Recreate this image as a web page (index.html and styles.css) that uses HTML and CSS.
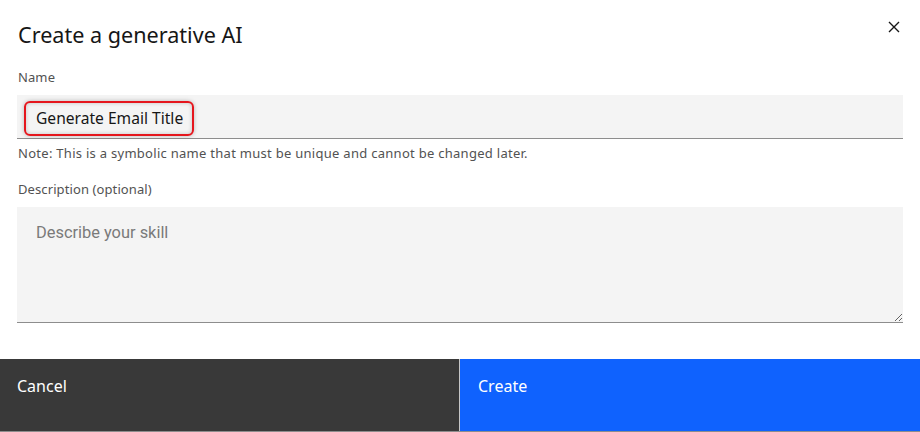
FILE: index.html
```html
<!DOCTYPE html>
<html lang="en">
<head>
<meta charset="utf-8">
<title>Create a generative AI</title>
<link rel="stylesheet" href="styles.css">
</head>
<body>
<div class="modal">
  <header class="modal-header">
    <h2 class="modal-title">Create a generative AI</h2>
    <button class="close" aria-label="Close">
      <svg width="12" height="12" viewBox="0 0 12 12"><path d="M1 1 L11 11 M11 1 L1 11" stroke="#161616" stroke-width="1.4" fill="none"/></svg>
    </button>
  </header>
  <div class="modal-body">
    <div class="label">Name</div>
    <div class="text-input"><span class="highlight">Generate Email Title</span></div>
    <div class="helper">Note: This is a symbolic name that must be unique and cannot be changed later.</div>
    <div class="label label-gap">Description (optional)</div>
    <textarea class="text-area" placeholder="Describe your skill"></textarea>
  </div>
  <footer class="modal-footer">
    <button class="btn btn-secondary">Cancel</button>
    <button class="btn btn-primary">Create</button>
  </footer>
</div>
</body>
</html>
```
FILE: styles.css
```css
* { box-sizing: border-box; }
html, body { margin: 0; padding: 0; background: #fff; }
body { font-family: "Noto Sans", "Open Sans", sans-serif; color: #161616; }
.modal { width: 920px; height: 432px; display: flex; flex-direction: column; }
.modal-header { display: flex; justify-content: space-between; align-items: flex-start; padding: 21px 20px 0 18px; }
.modal-title { margin: 0; font-size: 21.6px; line-height: 28px; font-weight: 400; color: #161616; }
.close { border: 0; background: none; padding: 0; width: 12px; height: 12px; display: block; }
.close svg { display: block; }
.modal-body { padding: 0 17px; display: flex; flex-direction: column; }
.label { margin-top: 20px; padding-left: 1px; font-size: 13px; line-height: 16px; color: #525252; letter-spacing: 0.1px; }
.label-gap { margin-top: 20px; }
.text-input { margin-top: 10px; height: 44px; background: #f4f4f4; border-bottom: 1px solid #8d8d8d; padding: 6px 0 0 7px; }
.highlight { display: inline-block; height: 35px; border: 2px solid #e5161d; border-radius: 6px; padding: 0 9px 0 10px; font-size: 15.6px; line-height: 31px; color: #161616; box-shadow: 0 0 4px rgba(0,0,0,0.25), inset 0 0 4px rgba(0,0,0,0.2); }
.helper { margin-top: 6px; padding-left: 1px; font-size: 13px; line-height: 16px; color: #525252; letter-spacing: 0.28px; }
.text-area { margin-top: 10px; height: 116px; width: 100%; background: #f4f4f4; border: 0; border-bottom: 1px solid #8d8d8d; border-radius: 0; resize: vertical; padding: 16px 19px; font-family: Roboto, sans-serif; font-size: 16.4px; line-height: 20px; color: #161616; outline: none; }
.text-area::placeholder { color: #7a7a7a; }
.modal-footer { margin-top: auto; display: grid; grid-template-columns: 1fr 1fr; height: 73px; border-bottom: 1px solid #8d8d8d; }
.btn { border: 0; margin: 0; font-family: "Noto Sans", sans-serif; font-size: 16px; line-height: 20px; color: #fff; text-align: left; padding: 17px 0 0 17px; display: flex; align-items: flex-start; }
.btn-secondary { background: #393939; border-right: 1px solid #c6c6c6; }
.btn-primary { background: #0f62fe; padding-left: 18px; }
```
